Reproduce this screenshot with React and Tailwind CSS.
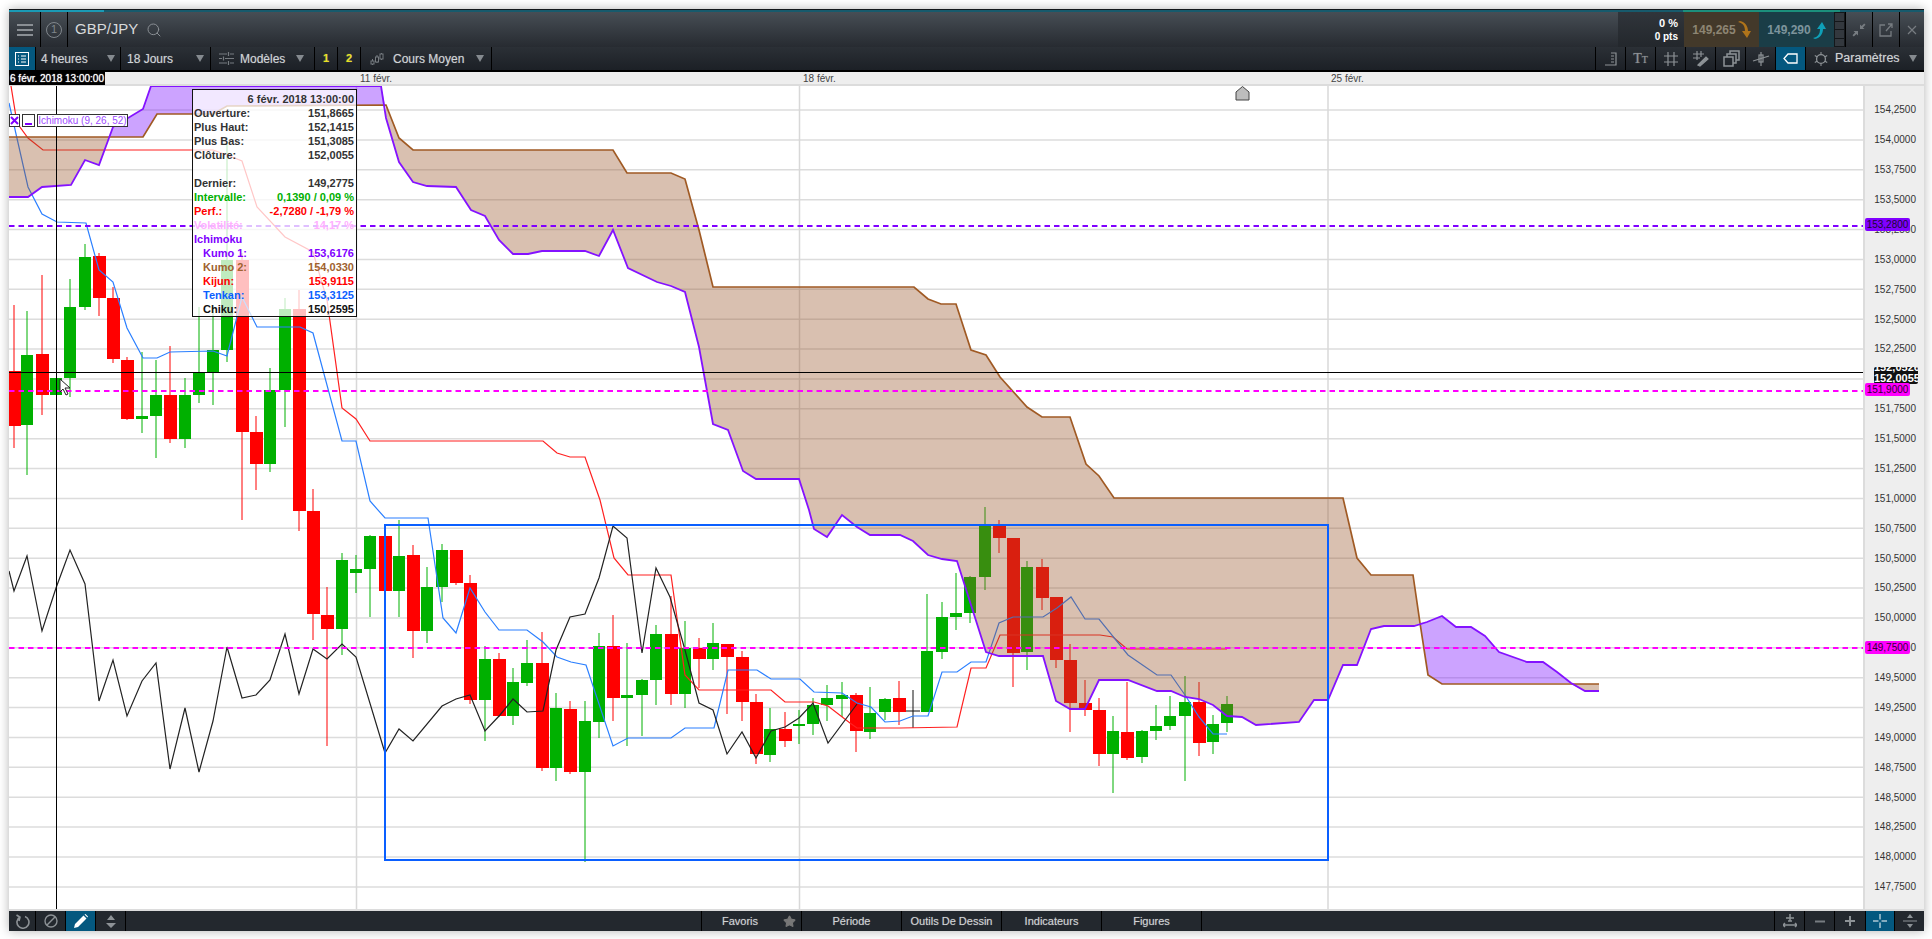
import React from "react";
import { Search, Star } from "lucide-react";

const K1 = [[9,197],[28,197],[42,187],[71,185],[85,160],[99,165],[113,127],[143,109],[151,86],[381,86],[386,118],[399,162],[413,182],[427,186],[456,187],[471,210],[485,216],[499,240],[513,254],[528,254],[542,251],[585,251],[599,256],[613,230],[628,268],[657,282],[671,286],[685,292],[699,347],[713,424],[728,430],[743,471],[756,479],[799,479],[809,510],[814,529],[827,537],[842,515],[857,527],[870,535],[900,535],[913,541],[928,555],[942,559],[957,561],[986,652],[999,656],[1043,656],[1056,701],[1070,709],[1085,709],[1099,680],[1128,680],[1157,691],[1171,691],[1185,697],[1199,699],[1213,705],[1227,716],[1242,717],[1256,725],[1299,722],[1314,700],[1328,700],[1343,665],[1357,665],[1371,629],[1384,626],[1414,626],[1427,622],[1442,616],[1456,627],[1471,627],[1485,636],[1499,652],[1527,662],[1543,662],[1557,672],[1571,683],[1585,691],[1599,691]];
const K2 = [[9,137],[143,137],[157,114],[213,114],[227,106],[386,105],[399,138],[413,150],[613,150],[627,173],[671,173],[685,179],[699,230],[713,287],[914,287],[928,299],[941,304],[956,304],[971,350],[986,355],[1000,377],[1027,407],[1042,417],[1070,417],[1086,464],[1099,476],[1114,498],[1343,498],[1357,558],[1371,575],[1413,575],[1420,623],[1428,675],[1442,684],[1599,684]];
const TENKAN = [[9,103],[28,187],[42,214],[57,222],[86,223],[99,270],[113,282],[127,328],[143,358],[157,358],[170,352],[213,351],[227,356],[242,297],[257,327],[300,327],[313,333],[342,441],[356,441],[370,501],[385,518],[428,518],[443,618],[456,633],[470,588],[485,612],[499,630],[527,630],[543,642],[557,657],[571,662],[586,665],[613,746],[628,738],[671,738],[685,728],[714,728],[728,670],[757,670],[771,679],[800,679],[814,692],[842,693],[857,703],[871,707],[885,722],[900,721],[913,716],[928,716],[942,672],[957,672],[971,662],[986,662],[999,623],[1013,617],[1043,617],[1057,608],[1071,597],[1085,619],[1099,619],[1128,655],[1157,675],[1171,675],[1185,695],[1199,717],[1213,734],[1227,734]];
const KIJUN = [[11,86],[17,123],[28,138],[43,150],[213,150],[227,155],[242,161],[257,207],[285,237],[313,252],[327,300],[342,408],[356,419],[370,441],[543,441],[557,453],[570,457],[585,457],[600,500],[614,558],[628,575],[671,575],[685,675],[699,690],[771,690],[785,702],[814,702],[828,706],[850,723],[857,728],[900,728],[957,727],[971,668],[986,668],[1000,635],[1100,635],[1113,637],[1127,649],[1227,649]];
const CHIKU = [[9,571],[14,591],[27,556],[42,631],[56,588],[70,550],[85,584],[99,701],[113,660],[127,716],[142,681],[156,663],[170,769],[185,708],[199,772],[213,721],[227,647],[242,698],[256,695],[270,680],[285,634],[299,694],[313,649],[327,659],[342,644],[356,657],[385,753],[399,729],[413,741],[442,706],[456,699],[470,695],[485,731],[500,715],[513,699],[527,712],[543,711],[556,650],[570,617],[585,614],[599,578],[613,526],[627,538],[642,653],[656,568],[670,597],[685,650],[699,703],[713,710],[727,754],[742,732],[756,758],[771,731],[785,727],[799,718],[813,703],[828,743],[857,704]];

// x, body top, body bottom, wick top, wick bottom, colour
const CANDLES = [
  [14,371,426,305,448,"r"],[27,355,425,311,475,"g"],[42,354,395,275,415,"r"],[56,378,395,378,395,"g"],[70,307,378,279,397,"g"],
  [85,257,307,244,310,"g"],[99,256,298,253,316,"r"],[113,298,359,287,363,"r"],[127,360,419,357,420,"r"],[142,416,419,352,433,"g"],
  [156,395,416,360,458,"g"],[170,395,439,346,443,"r"],[185,395,439,378,448,"g"],[199,373,395,307,403,"g"],[213,350,372,307,405,"g"],
  [227,260,350,143,362,"g"],[242,260,432,253,520,"r"],[256,432,464,416,490,"r"],[270,390,464,368,472,"g"],[285,309,390,298,427,"g"],
  [299,309,511,290,531,"r"],[313,511,614,489,640,"r"],[327,615,629,587,746,"r"],[342,560,629,553,655,"g"],[356,569,573,555,593,"g"],
  [370,536,569,535,617,"g"],[385,536,591,536,591,"r"],[399,556,591,520,617,"g"],[413,555,631,545,658,"r"],[427,587,631,567,643,"g"],
  [442,550,587,544,602,"g"],[456,550,583,550,585,"r"],[470,583,700,575,704,"r"],[485,659,700,646,741,"g"],[499,659,716,653,717,"r"],
  [513,682,716,668,725,"g"],[527,663,683,640,686,"g"],[542,663,768,632,771,"r"],[556,708,768,693,781,"g"],[570,709,772,701,774,"r"],
  [585,721,772,701,862,"g"],[599,646,722,633,738,"g"],[613,646,698,615,721,"r"],[627,695,698,643,746,"g"],[642,680,695,679,736,"g"],
  [656,634,680,625,705,"g"],[671,634,694,596,705,"r"],[685,648,694,621,708,"g"],[699,648,659,638,688,"r"],[713,643,659,623,670,"g"],
  [727,644,657,644,714,"r"],[742,657,702,651,721,"r"],[756,702,754,694,764,"r"],[770,729,755,708,762,"g"],[785,729,741,712,747,"r"],
  [799,724,726,710,744,"g"],[813,705,724,698,735,"g"],[827,698,705,685,721,"g"],[842,695,699,682,717,"g"],[856,695,731,693,752,"r"],
  [870,713,732,687,739,"g"],[885,699,712,698,720,"g"],[899,698,712,681,725,"r"],[927,651,712,594,712,"g"],[942,617,652,602,659,"g"],
  [956,613,617,573,630,"g"],[970,577,613,576,623,"g"],[985,525,577,507,590,"g"],[999,526,538,520,553,"r"],[1013,538,653,538,687,"r"],
  [1027,567,652,561,670,"g"],[1042,567,598,559,610,"r"],[1056,597,660,597,668,"r"],[1070,660,703,644,732,"r"],[1085,703,710,680,716,"r"],
  [1099,710,754,698,766,"r"],[1113,731,754,716,793,"g"],[1127,732,758,682,760,"r"],[1142,731,757,730,763,"g"],[1156,726,731,705,740,"g"],
  [1170,716,726,696,730,"g"],[1185,702,716,676,781,"g"],[1199,702,743,682,756,"r"],[1213,724,742,715,754,"g"],[1227,704,723,696,732,"g"],
];

const BROWN = "rgba(152,84,40,.37)";
const PURPLE = "rgba(128,25,255,.4)";
const pts = (list) => list.map((p) => p.join(",")).join(" ");
const K1_MID = K1.slice(11, 69);

function Chart() {
  return (
    <svg viewBox="9 86 1854 825" className="block h-[825px] w-[1854px]">
      {Array.from({ length: 27 }, (_, i) => (
        <line key={i} x1="9" x2="1863" y1={110 + i * 29.88} y2={110 + i * 29.88} stroke="#dcdcdc" strokeWidth="1.5" />
      ))}
      {[356.5, 799.5, 1328].map((x) => (
        <line key={x} x1={x} x2={x} y1="86" y2="911" stroke="#d8d8d8" strokeWidth="1.5" />
      ))}
      {CANDLES.map(([x, t, b, wt, wb, c]) => {
        const col = c === "r" ? "#ff0000" : "#00b000";
        return (
          <g key={x}>
            <line x1={x} x2={x} y1={wt} y2={wb} stroke={col} strokeWidth="1" />
            <rect x={x - 6} y={t} width={c === "r" ? 13 : 12} height={b - t} fill={col} />
          </g>
        );
      })}
      <path d="M913 690V728M906 711H920" stroke="#111" strokeWidth="1" fill="none" />
      <polyline points={pts(KIJUN)} fill="none" stroke="#ff2020" strokeWidth="1.2" />
      <polyline points={pts(TENKAN)} fill="none" stroke="#2a7fff" strokeWidth="1.2" />
      <polyline points={pts(CHIKU)} fill="none" stroke="#222" strokeWidth="1.2" />
      {/* cloud */}
      <polygon points="9,137 109,137 99,165 85,160 71,185 42,187 28,197 9,197" fill={BROWN} />
      <polygon points="109,137 143,137 157,114 213,114 227,106 385,105 381,86 151,86 143,109 113,127" fill={PURPLE} />
      <polygon points={`386,105 ${pts(K2.slice(6, 31))} 1420,623 ${pts([...K1_MID].reverse())} 386,118`} fill={BROWN} />
      <polygon points="1420,623 1427,622 1442,616 1456,627 1471,627 1485,636 1499,652 1527,662 1543,662 1557,672 1571,683 1442,684 1428,675" fill={PURPLE} />
      <polygon points="1571,684 1599,684 1599,691 1585,691" fill={BROWN} />
      <polyline points={pts(K2)} fill="none" stroke="#a05a24" strokeWidth="1.7" />
      <polyline points={pts(K1)} fill="none" stroke="#8412ff" strokeWidth="1.8" />
      <line x1="9" x2="1863" y1="226" y2="226" stroke="#8000ff" strokeWidth="2" strokeDasharray="5.5 4" />
      <line x1="9" x2="1863" y1="391" y2="391" stroke="#ff00ff" strokeWidth="2" strokeDasharray="5.5 4" />
      <line x1="9" x2="1863" y1="648" y2="648" stroke="#ff00ff" strokeWidth="2" strokeDasharray="5.5 4" />
      <rect x="385" y="525" width="943" height="335" fill="none" stroke="#0a5fff" strokeWidth="2" />
      <path d="M1236 100V92L1242.5 86.5L1249 92V100Z" fill="#bdbdbd" stroke="#444" strokeWidth="1" />
      <line x1="56.5" x2="56.5" y1="86" y2="911" stroke="#000" strokeWidth="1" />
      <line x1="9" x2="1863" y1="372.5" y2="372.5" stroke="#000" strokeWidth="1" />
      <path d="M60 379V392L63 389L66 395L68 394L65 388L70 388Z" fill="#fff" stroke="#222" strokeWidth="1" />
    </svg>
  );
}

function TipRow({ label, value, className = "", indent = false }) {
  return (
    <div className={`flex h-[14px] items-center justify-between ${indent ? "pl-[9px]" : ""} ${className}`}>
      <span>{label}</span>
      <span>{value}</span>
    </div>
  );
}

function Tooltip() {
  return (
    <div className="absolute left-[183px] top-[3px] h-[228px] w-[165px] border-[1.5px] border-[#111] bg-white/75 pl-[1px] pr-[2px] pt-[2px] text-[11px] font-bold leading-[14px] text-[#333]">
      <div className="h-[14px] text-right">6 févr. 2018 13:00:00</div>
      <TipRow label="Ouverture:" value="151,8665" />
      <TipRow label="Plus Haut:" value="152,1415" />
      <TipRow label="Plus Bas:" value="151,3085" />
      <TipRow label="Clôture:" value="152,0055" />
      <div className="h-[14px]" />
      <TipRow label="Dernier:" value="149,2775" />
      <TipRow label="Intervalle:" value="0,1390 / 0,09 %" className="text-[#00b000]" />
      <TipRow label="Perf.:" value="-2,7280 / -1,79 %" className="text-[#ff0000]" />
      <TipRow label="Volatilité:" value="14,17 %" className="text-[#ffb0ff]" />
      <TipRow label="Ichimoku" value="" className="text-[#8000ff]" />
      <TipRow indent label="Kumo 1:" value="153,6176" className="text-[#8000ff]" />
      <TipRow indent label="Kumo 2:" value="154,0330" className="text-[#a0622e]" />
      <TipRow indent label="Kijun:" value="153,9115" className="text-[#ff0000]" />
      <TipRow indent label="Tenkan:" value="153,3125" className="text-[#0a60ff]" />
      <TipRow indent label="Chiku:" value="150,2595" className="text-[#111]" />
    </div>
  );
}

function IchimokuTag() {
  return (
    <div className="absolute left-0 top-[28px] flex h-[13px] items-center gap-[2px] text-[10px] leading-none text-[#a04dff]">
      <div className="flex h-[13px] w-[11px] items-center justify-center border border-[#333] bg-white">
        <svg width="9" height="9" viewBox="0 0 9 9"><path d="M1 1L8 8M8 1L1 8" stroke="#8000ff" strokeWidth="2" /></svg>
      </div>
      <div className="flex h-[13px] w-[13px] items-end justify-center border border-[#333] bg-white pb-[1px]">
        <div className="h-[2px] w-[7px] bg-[#8000ff]" />
      </div>
      <div className="flex h-[13px] w-[91px] items-center justify-center border border-[#333] bg-white">Ichimoku (9, 26, 52)</div>
    </div>
  );
}

function PriceAxis() {
  const labels = Array.from({ length: 27 }, (_, i) => (154.25 - i * 0.25).toFixed(4).replace(".", ","));
  return (
    <div className="relative flex-1 border-l-2 border-[#dcdcdc] bg-[#eeeeee] pt-[9px] text-[10px] text-[#333]">
      {labels.map((l) => (
        <div key={l} className="flex h-[29.88px] items-center justify-end pr-[8px]">{l}</div>
      ))}
      <div className="absolute left-0 top-[132px] flex h-[13px] w-[45px] items-center justify-center rounded-[2px] bg-[#8000ff] text-[#1a0a33]">153,2800</div>
      <div className="absolute left-[9px] top-[281px] h-[17px] w-[44px] overflow-hidden rounded-[2px] bg-[#111] text-center text-[11px] font-bold leading-[13px] text-white">
        <div className="-mt-[6px]">152,0526</div>
        <div className="-mt-[2px]">152,0055</div>
      </div>
      <div className="absolute left-0 top-[297px] flex h-[13px] w-[45px] items-center justify-center rounded-[2px] bg-[#ff00ff] text-[#330033]">151,9000</div>
      <div className="absolute left-0 top-[555px] flex h-[13px] w-[45px] items-center justify-center rounded-[2px] bg-[#ff00ff] text-[#330033]">149,7500</div>
    </div>
  );
}

function Caret() {
  return <svg width="8" height="7" viewBox="0 0 8 7" className="shrink-0"><path d="M0 0H8L4 7Z" fill="#858a8f" /></svg>;
}

function Cell({ className = "", children }) {
  return <div className={`flex h-full shrink-0 items-center border-r border-black ${className}`}>{children}</div>;
}

function Ico({ size = 18, children, className = "" }) {
  return (
    <svg width={size} height={size} viewBox="0 0 18 18" fill="none" stroke="#8d9296" strokeWidth="1.2" className={className}>
      {children}
    </svg>
  );
}

function TitleBar() {
  return (
    <div className="flex h-[35px] shrink-0 bg-linear-to-b from-[#474e55] to-[#272b31]">
      <Cell className="w-[32px] justify-center border-[#14171a]">
        <svg width="16" height="12" viewBox="0 0 16 12"><path d="M0 1H16M0 6H16M0 11H16" stroke="#8a8f94" strokeWidth="2" /></svg>
      </Cell>
      <Cell className="w-[27px] justify-center border-[#14171a]">
        <div className="flex h-[16px] w-[16px] items-center justify-center rounded-full border border-[#80868c] text-[11px] text-[#80868c]">1</div>
      </Cell>
      <div className="flex flex-1 items-center pl-[7px] text-[15px] text-[#d8dadc]">
        GBP/JPY
        <Search size={16} strokeWidth={1.5} className="ml-[8px] text-[#8a8f94]" />
      </div>
      <div className="flex w-[66px] flex-col items-end justify-center bg-linear-to-b from-[#30353b] to-[#23272c] pr-[6px] text-[10px] font-bold leading-[13px] text-white">
        <span className="text-[11px]">0 %</span>
        <span>0 pts</span>
      </div>
      <div className="flex w-[75px] items-center justify-center gap-[1px] bg-[#43392a] text-[12px] font-bold text-[#8d8573]">
        149,265
        <svg width="14" height="18" viewBox="0 0 14 18"><path d="M1 1C6 2 8 5 8 10H5L10 17L14 10H11C11 5 8 1 3 0Z" fill="#b0741a" /></svg>
      </div>
      <div className="flex w-[75px] items-center justify-center gap-[1px] bg-[#1a3d47] text-[12px] font-bold text-[#7d949c]">
        149,290
        <svg width="14" height="18" viewBox="0 0 14 18"><path d="M1 17C6 16 8 13 8 8H5L10 1L14 8H11C11 13 8 17 3 18Z" fill="#0fa0b8" /></svg>
      </div>
      <div className="flex w-[12px] flex-col gap-[1px] border-r border-black bg-[#14171a] p-[1px]">
        {[0, 1, 2, 3].map((i) => <div key={i} className="flex-1 bg-[#33383e]" />)}
      </div>
      <Cell className="w-[27px] justify-center">
        <svg width="14" height="14" viewBox="0 0 14 14" fill="#777c81"><path d="M8 6V1.5L9.6 3.1L12.2 .5L13.5 1.8L10.9 4.4L12.5 6ZM6 8V12.5L4.4 10.9L1.8 13.5L.5 12.2L3.1 9.6L1.5 8Z" /></svg>
      </Cell>
      <Cell className="w-[27px] justify-center">
        <svg width="14" height="14" viewBox="0 0 14 14" fill="none" stroke="#777c81" strokeWidth="1.3"><path d="M6 2H1V13H12V8M7 8L13 1M9 1H13V5" /></svg>
      </Cell>
      <div className="flex w-[24px] items-center justify-center">
        <svg width="10" height="10" viewBox="0 0 10 10"><path d="M1 1L9 9M9 1L1 9" stroke="#777c81" strokeWidth="1.2" /></svg>
      </div>
    </div>
  );
}

function Toolbar() {
  const tools = [
    <Ico key="a"><path d="M3 15H14V3H9M9 6H12M9 9H12M9 12H12" /></Ico>,
    <span key="b" className="font-['Liberation_Serif',serif] text-[14px] text-[#8d9296]">T<span className="text-[10px]">T</span></span>,
    <Ico key="c"><path d="M6 2V16M12 2V16M2 6H16M2 12H16" /></Ico>,
    <Ico key="d"><path d="M5 1V10M9 1V7M1 4H12M1 8H8" /><path d="M6 15L14 7L16 9L8 16Z" fill="#8d9296" /></Ico>,
    <Ico key="e"><path d="M2 7H11V16H2ZM5 7V4H14V13H11M8 4V1H17V10H14" strokeWidth="1.5" /></Ico>,
    <Ico key="f"><path d="M1 11L17 6" /><rect x="7" y="5" width="4" height="7" /><path d="M9 2V16" /></Ico>,
  ];
  return (
    <div className="flex h-[25px] shrink-0 border-b-[2px] border-black bg-linear-to-b from-[#2b3036] to-[#1c2026] text-[12px] text-[#d0d3d6] [text-shadow:0_0_1px_rgba(208,211,214,0.5)]">
      <Cell className="w-[27px] justify-center bg-[#04587f]">
        <svg width="14" height="14" viewBox="0 0 14 14" fill="none" stroke="#fff" strokeWidth="1"><rect x="0.5" y="0.5" width="13" height="13" /><path d="M3 4H4M6 4H11M3 7H4M6 7H11M3 10H4M6 10H11" /></svg>
      </Cell>
      <Cell className="w-[85px] justify-between pl-[5px] pr-[5px]">4 heures<Caret /></Cell>
      <Cell className="w-[90px] justify-between pl-[6px] pr-[6px]">18 Jours<Caret /></Cell>
      <Cell className="w-[104px] gap-[6px] pl-[8px]">
        <svg width="15" height="13" viewBox="0 0 15 13" fill="none" stroke="#777c81" strokeWidth="1.2"><path d="M0 2H8M11 2H15M0 6.5H3M6 6.5H15M0 11H8M11 11H15M9.5 0V4M4.5 4.5V8.5M9.5 9V13" /></svg>
        <span>Modèles</span>
        <span className="ml-[5px]"><Caret /></span>
      </Cell>
      <Cell className="w-[23px] justify-center text-[11px] font-bold text-[#e8e020]">1</Cell>
      <Cell className="w-[23px] justify-center text-[11px] font-bold text-[#e8e020]">2</Cell>
      <Cell className="w-[131px] gap-[9px] pl-[9px]">
        <svg width="14" height="14" viewBox="0 0 14 14" fill="none" stroke="#777c81" strokeWidth="1"><path d="M2.5 7V13M7 3V11M11.5 1V8" /><rect x="1" y="9" width="3" height="3" fill="#1f2329" /><rect x="5.5" y="5" width="3" height="5" fill="#1f2329" /><rect x="10" y="2" width="3" height="5" fill="#1f2329" /></svg>
        <span>Cours Moyen</span>
        <span className="ml-[3px]"><Caret /></span>
      </Cell>
      <div className="flex-1 border-r border-black" />
      {tools.map((t, i) => (
        <Cell key={i} className="w-[30px] justify-center">{t}</Cell>
      ))}
      <Cell className="w-[30px] justify-center bg-[#04587f]">
        <svg width="15" height="11" viewBox="0 0 15 11" fill="none" stroke="#fff" strokeWidth="1.3"><path d="M14 1V10H5L1 5.5L5 1Z" /></svg>
      </Cell>
      <div className="flex w-[118px] shrink-0 items-center gap-[6px] pl-[7px] pr-[7px]">
        <Ico size={16}><circle cx="9" cy="9" r="5" strokeWidth="1.5" /><path d="M9 1V4M9 14V17M2 5L4.5 6.5M13.5 11.5L16 13M2 13L4.5 11.5M13.5 6.5L16 5" /></Ico>
        <span className="flex-1 text-[12.5px]">Paramètres</span>
        <Caret />
      </div>
    </div>
  );
}

function BottomBar() {
  const tabs = ["Période", "Outils De Dessin", "Indicateurs", "Figures"];
  return (
    <div className="flex h-[20px] shrink-0 bg-[#23282e] text-[11px] text-[#d0d2d4] [text-shadow:0_0_1px_rgba(208,210,212,0.5)]">
      <Cell className="w-[27px] justify-center">
        <svg width="15" height="15" viewBox="0 0 15 15" fill="none" stroke="#8d9296" strokeWidth="1.6"><path d="M5 3A6 6 0 1 0 10 2.6M1.5 1L5 3.2L4 7" /></svg>
      </Cell>
      <Cell className="w-[30px] justify-center">
        <svg width="14" height="14" viewBox="0 0 14 14" fill="none" stroke="#8d9296" strokeWidth="1.4"><circle cx="7" cy="7" r="6" /><path d="M2.8 11.2L11.2 2.8" /></svg>
      </Cell>
      <Cell className="w-[30px] justify-center bg-[#04587f]">
        <svg width="14" height="14" viewBox="0 0 14 14" fill="#fff"><path d="M0 14L1 10L9.5 1.5L12.5 4.5L4 13ZM10.5 .5L11.5 0L14 2.5L13.5 3.5Z" /></svg>
      </Cell>
      <Cell className="w-[30px] justify-center">
        <svg width="12" height="13" viewBox="0 0 12 13" fill="#8d9296"><path d="M6 0L10 5H2ZM6 13L1 8H11Z" /></svg>
      </Cell>
      <div className="w-[575px]" />
      <div className="h-full border-l border-black" />
      <Cell className="w-[100px] justify-between pl-[20px] pr-[5px]">
        Favoris
        <Star size={13} fill="#777" stroke="#777" />
      </Cell>
      {tabs.map((t) => (
        <Cell key={t} className="w-[100px] justify-center">{t}</Cell>
      ))}
      <div className="flex-1 border-r border-black" />
      <Cell className="w-[30px] justify-center">
        <svg width="14" height="14" viewBox="0 0 14 14" fill="none" stroke="#8d9296" strokeWidth="1.5"><path d="M7 0V7M3 4H11M0 11H14M2 9L0 11L2 13M12 9L14 11L12 13M5 7H9" /></svg>
      </Cell>
      <Cell className="w-[30px] justify-center">
        <svg width="10" height="3" viewBox="0 0 10 3"><path d="M0 1.5H10" stroke="#777c81" strokeWidth="2" /></svg>
      </Cell>
      <Cell className="w-[31px] justify-center">
        <svg width="10" height="10" viewBox="0 0 10 10"><path d="M0 5H10M5 0V10" stroke="#8d9296" strokeWidth="2" /></svg>
      </Cell>
      <Cell className="w-[29px] justify-center bg-[#04587f]">
        <svg width="14" height="14" viewBox="0 0 14 14"><path d="M0 7H5.5M8.5 7H14M7 0V5.5M7 8.5V14" stroke="#fff" strokeWidth="1" /></svg>
      </Cell>
      <div className="flex w-[29px] items-center justify-center">
        <svg width="14" height="14" viewBox="0 0 14 14" fill="#8d9296"><path d="M7 0L10 4H4ZM7 14L4 10H10ZM0 6.5H14V7.5H0Z" /></svg>
      </div>
    </div>
  );
}

export default function App() {
  return (
    <div className="h-[939px] w-[1932px] overflow-hidden bg-white pl-[9px] pt-[9px] font-['Liberation_Sans',Arial,sans-serif]">
      <div className="flex h-[922px] w-[1915px] flex-col shadow-[0_0_10px_rgba(0,0,0,0.3)]">
        <div className="flex h-[3px] shrink-0 border-t border-[#14171a] bg-[#175a6c]">
          <div className="w-[95px] bg-[#1a9ab5]" />
          <div className="w-[1579px]" />
          <div className="w-[157px] bg-[#1c8f7c]" />
        </div>
        <TitleBar />
        <Toolbar />
        <div className="relative h-[14px] shrink-0 border-b-2 border-[#dcdcdc] bg-[#eeeeee] text-[10px] text-[#444]">
          <div className="absolute left-0 top-0 flex h-[13px] w-[96px] items-center justify-center whitespace-nowrap bg-black text-white [text-shadow:0_0_1px_#fff]">6 févr. 2018 13:00:00</div>
          <span className="absolute left-[351px] top-0 leading-[13px]">11 févr.</span>
          <span className="absolute left-[794px] top-0 leading-[13px]">18 févr.</span>
          <span className="absolute left-[1322px] top-0 leading-[13px]">25 févr.</span>
        </div>
        <div className="flex h-[825px] shrink-0 border-b-2 border-[#dcdcdc]">
          <div className="relative h-[823px] w-[1854px] overflow-hidden bg-white">
            <Chart />
            <IchimokuTag />
            <Tooltip />
          </div>
          <PriceAxis />
        </div>
        <BottomBar />
      </div>
    </div>
  );
}
